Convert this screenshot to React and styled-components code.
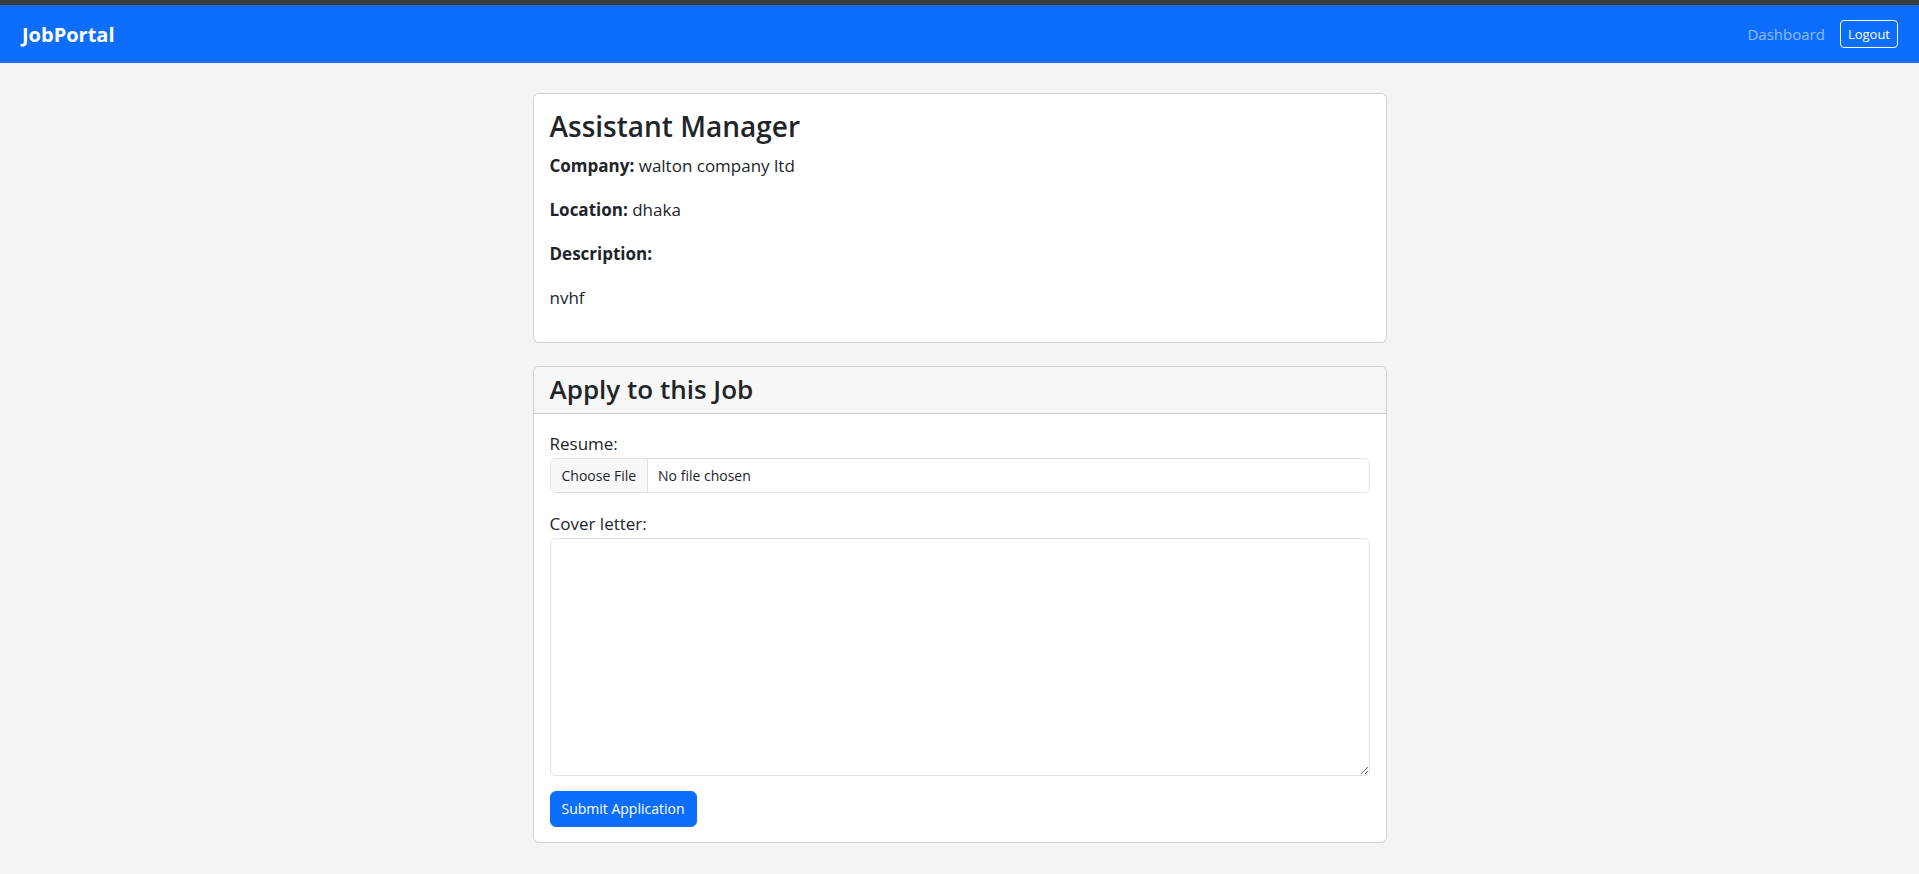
import React from 'react'
import styled, { createGlobalStyle } from 'styled-components'

const GlobalStyle = createGlobalStyle`
  * {
    box-sizing: border-box;
  }
  body {
    margin: 0;
    background: #f4f4f4;
    color: #212529;
    font-family: "Segoe UI", "Open Sans", "Noto Sans", sans-serif;
    font-size: 17px;
    line-height: 1.5;
  }
`

const job = {
  title: 'Assistant Manager',
  company: 'walton company ltd',
  location: 'dhaka',
  description: 'nvhf',
}

const App = () => {
  return (
    <>
      <GlobalStyle />
      <TopStrip />
      <Navbar>
        <Brand href="#">JobPortal</Brand>
        <NavRight>
          <NavLink href="#">Dashboard</NavLink>
          <LogoutButton type="button">Logout</LogoutButton>
        </NavRight>
      </Navbar>

      <Main>
        <Card>
          <CardBody>
            <JobTitle>{job.title}</JobTitle>
            <Detail>
              <strong>Company:</strong> {job.company}
            </Detail>
            <Detail>
              <strong>Location:</strong> {job.location}
            </Detail>
            <Detail>
              <strong>Description:</strong>
            </Detail>
            <Detail $last>{job.description}</Detail>
          </CardBody>
        </Card>

        <Card>
          <CardHeader>
            <HeaderTitle>Apply to this Job</HeaderTitle>
          </CardHeader>
          <FormBody onSubmit={(e) => e.preventDefault()}>
            <Field>
              <Label htmlFor="resume">Resume:</Label>
              <FileInput id="resume" type="file" />
            </Field>
            <Field>
              <Label htmlFor="cover">Cover letter:</Label>
              <TextArea id="cover" />
            </Field>
            <SubmitButton type="submit">Submit Application</SubmitButton>
          </FormBody>
        </Card>
      </Main>
    </>
  )
}

const TopStrip = styled.div`
  height: 5px;
  background: #3b3b3b;
`

const Navbar = styled.nav`
  height: 58px;
  background: #0d6efd;
  display: flex;
  align-items: center;
  justify-content: space-between;
  padding: 0 21px 0 22px;
`

const Brand = styled.a`
  color: #fff;
  font-size: 20px;
  font-weight: 700;
  text-decoration: none;
  margin-top: 1px;
`

const NavRight = styled.div`
  display: flex;
  align-items: center;
  gap: 15px;
`

const NavLink = styled.a`
  color: rgba(255, 255, 255, 0.55);
  font-size: 15px;
  text-decoration: none;
`

const LogoutButton = styled.button`
  height: 28px;
  padding: 0 7px;
  background: transparent;
  color: #fff;
  border: 1px solid #fff;
  border-radius: 4px;
  font-family: inherit;
  font-size: 13px;
  cursor: pointer;
`

const Main = styled.main`
  width: 854px;
  margin: 30px auto;
  display: flex;
  flex-direction: column;
  gap: 23px;
`

const Card = styled.section`
  background: #fff;
  border: 1px solid rgba(0, 0, 0, 0.175);
  border-radius: 6px;
  overflow: hidden;
`

const CardBody = styled.div`
  padding: 16px;
`

const FormBody = styled.form`
  padding: 16px 16px 15px;
`

const JobTitle = styled.h3`
  margin: 0 0 10px;
  font-size: 28px;
  font-weight: 600;
  line-height: 1.2;
`

const Detail = styled.p`
  margin: 0 0 ${(p) => (p.$last ? '16px' : '20px')};
  line-height: 24px;
  strong {
    font-weight: 700;
  }
`

const CardHeader = styled.div`
  height: 47px;
  padding: 0 16px;
  display: flex;
  align-items: center;
  background: #f7f7f7;
  border-bottom: 1px solid rgba(0, 0, 0, 0.175);
`

const HeaderTitle = styled.h4`
  margin: 0;
  font-size: 26px;
  font-weight: 600;
  line-height: 1.2;
`

const Field = styled.div`
  margin-bottom: 17px;
`

const Label = styled.label`
  display: block;
  line-height: 28px;
  height: 28px;
`

const FileInput = styled.input`
  display: block;
  width: 100%;
  height: 35px;
  padding: 0 10px;
  font-family: inherit;
  font-size: 14px;
  color: #212529;
  background: #fff;
  border: 1px solid #dee2e6;
  border-radius: 6px;
  overflow: hidden;

  &::file-selector-button {
    height: 35px;
    margin: -1px 10px -1px -10px;
    padding: 0 11px;
    font-family: inherit;
    font-size: 14px;
    color: #212529;
    background: #f6f8fa;
    border: none;
    border-right: 1px solid #dee2e6;
    border-radius: 0;
  }
`

const TextArea = styled.textarea`
  display: block;
  width: 100%;
  height: 238px;
  padding: 6px 12px;
  font-family: inherit;
  font-size: 16px;
  border: 1px solid #dee2e6;
  border-radius: 6px;
  resize: vertical;
`

const SubmitButton = styled.button`
  height: 36px;
  padding: 0 11px;
  margin-top: -2px;
  background: #0d6efd;
  color: #fff;
  border: 1px solid #0d6efd;
  border-radius: 6px;
  font-family: inherit;
  font-size: 14px;
  cursor: pointer;
`

export default App
